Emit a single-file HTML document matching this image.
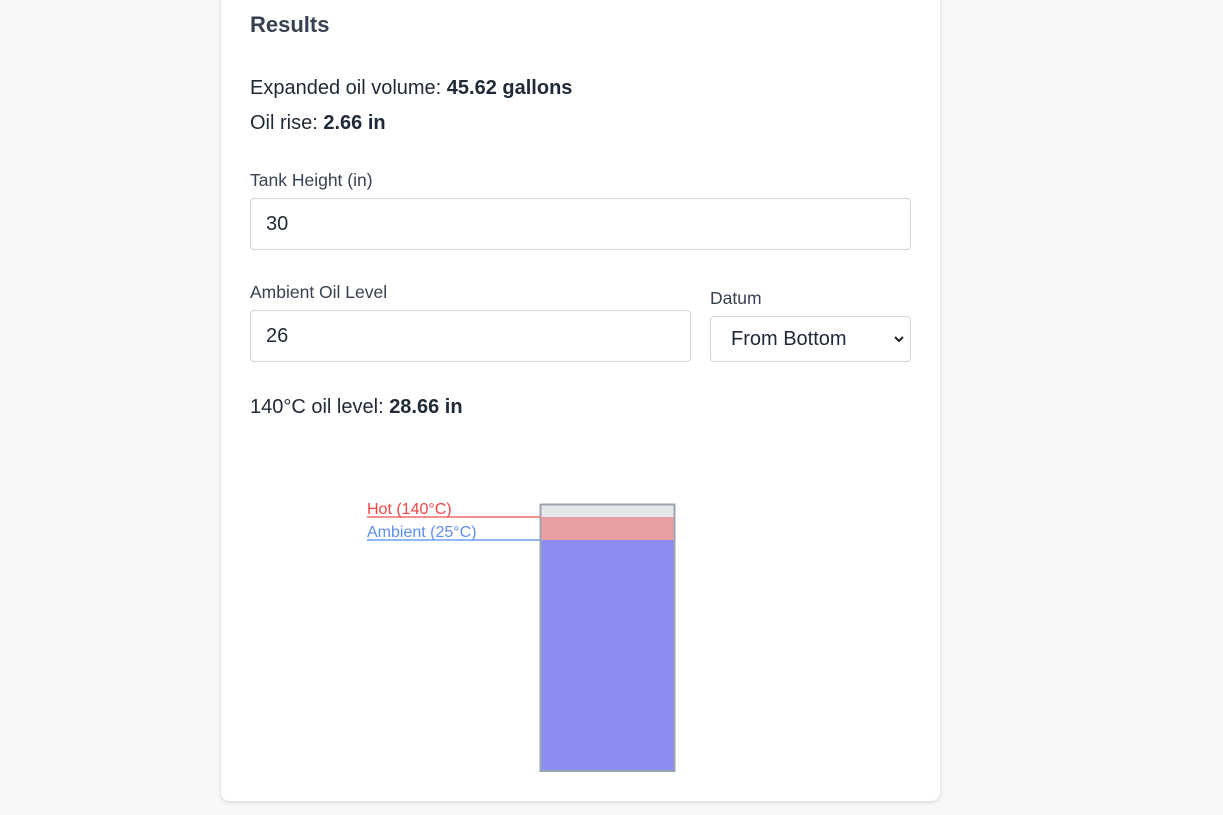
<!DOCTYPE html>
<html><head><style>
body{margin:0;width:1223px;height:815px;background:#f7f8fa;font-family:"Liberation Sans",sans-serif;position:relative;overflow:hidden;color:#1f2937}
.card{position:absolute;left:221px;top:-10px;width:719px;height:811px;background:#fff;border-radius:8px;box-shadow:0 1px 4px rgba(0,0,0,.15)}
.a{position:absolute;white-space:nowrap}
.in{position:absolute;box-sizing:border-box;border:1px solid #d1d5db;border-radius:4px;background:#fff;font-size:20px;padding-left:15px;color:#1f2937}
</style></head><body>
<div class="card"></div>
<div class="a" style="left:250px;top:12px;font-size:22px;font-weight:bold;color:#374151">Results</div>
<div class="a" style="left:250px;top:77px;font-size:20px">Expanded oil volume: <b>45.62 gallons</b></div>
<div class="a" style="left:250px;top:112px;font-size:20px">Oil rise: <b>2.66 in</b></div>
<div class="a" style="left:250px;top:170px;font-size:17.5px;color:#374151">Tank Height (in)</div>
<div class="in" style="left:250px;top:198px;width:661px;height:52px;line-height:50px">30</div>
<div class="a" style="left:250px;top:282px;font-size:17.5px;color:#374151">Ambient Oil Level</div>
<div class="in" style="left:250px;top:310px;width:441px;height:52px;line-height:50px">26</div>
<div class="a" style="left:710px;top:288px;font-size:17.5px;color:#374151">Datum</div>
<div class="in" style="left:710px;top:316px;width:201px;height:46px;line-height:44px;padding-left:20px">From Bottom
<svg style="position:absolute;right:6px;top:18px" width="10" height="8" viewBox="0 0 10 8"><path d="M1 2 L5 6 L9 2" stroke="#222" stroke-width="2" fill="none"/></svg></div>
<div class="a" style="left:250px;top:396px;font-size:20px">140°C oil level: <b>28.66 in</b></div>
<svg class="a" style="left:0;top:0" width="1223" height="815">
<rect x="541" y="505" width="133" height="12" fill="#e5e7eb"/>
<rect x="541" y="517" width="133" height="23" fill="#eaa0a3"/>
<rect x="541" y="540" width="133" height="231" fill="#8a8cf0"/>
<rect x="540.5" y="504.5" width="134" height="266.5" fill="none" stroke="#9ca3af" stroke-width="2"/>
<line x1="367" y1="517" x2="541" y2="517" stroke="#ef6b6b" stroke-width="1.5"/>
<line x1="367" y1="540" x2="541" y2="540" stroke="#6fa0f5" stroke-width="1.5"/>
<text x="367" y="514" font-size="16" fill="#ef4444" font-family="Liberation Sans">Hot (140°C)</text>
<text x="367" y="537" font-size="16" fill="#5b8def" font-family="Liberation Sans">Ambient (25°C)</text>
</svg>
</body></html>
